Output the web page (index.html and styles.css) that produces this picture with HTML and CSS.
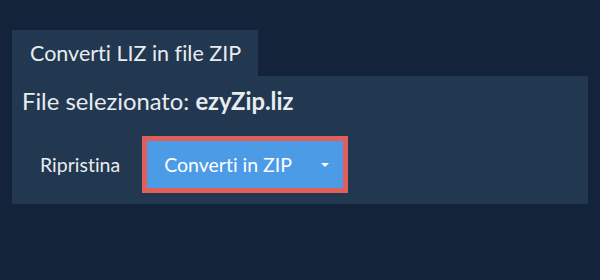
FILE: index.html
```html
<!DOCTYPE html>
<html lang="it">
<head>
    <meta charset="UTF-8">
    <title>Converti LIZ in file ZIP</title>
    <link rel="stylesheet" href="styles.css">
</head>
<body>
    <div class="converter">
        <div class="tab">Converti LIZ in file ZIP</div>
        <div class="panel">
            <div class="file-name">File selezionato: <b>ezyZip.liz</b></div>
            <div class="actions">
                <button class="reset">Ripristina</button>
                <div class="highlight">
                    <button class="convert">
                        <span>Converti in ZIP</span>
                        <span class="caret"></span>
                    </button>
                </div>
            </div>
        </div>
    </div>
</body>
</html>
```

FILE: styles.css
```css
/* Pagina */
body {
    margin: 0;
    background: #12233a;
    font-family: Lato, "Open Sans", sans-serif;
    font-variant-ligatures: none;
    color: #e8ecf0;
}

.converter {
    padding: 30px 12px 0;
}

/* Linguetta */
.tab {
    display: inline-block;
    background: #223750;
    font-size: 21.5px;
    line-height: 46px;
    height: 46px;
    padding: 0 17px 0 18px;
}

/* Pannello */
.panel {
    background: #223750;
    height: 128px;
    box-sizing: border-box;
    padding: 11px 10px 0;
}

.file-name {
    font-size: 23.8px;
    line-height: 28px;
}

.file-name b {
    font-weight: 700;
}

.actions {
    display: flex;
    align-items: center;
    margin-top: 21px;
}

button {
    font-family: inherit;
    font-variant-ligatures: none;
    cursor: pointer;
    border: none;
}

.reset {
    background: none;
    color: #e8ecf0;
    font-size: 19.5px;
    padding: 0 22px 0 18px;
}

.highlight {
    border: 5px solid #df605b;
}

.convert {
    display: flex;
    align-items: center;
    background: #4c9be6;
    color: #fff;
    font-size: 19.5px;
    height: 47px;
    width: 196px;
    padding: 0 14px 0 17px;
}

.caret {
    margin-left: auto;
    border-left: 4px solid transparent;
    border-right: 4px solid transparent;
    border-top: 4px solid #fff;
}
```
